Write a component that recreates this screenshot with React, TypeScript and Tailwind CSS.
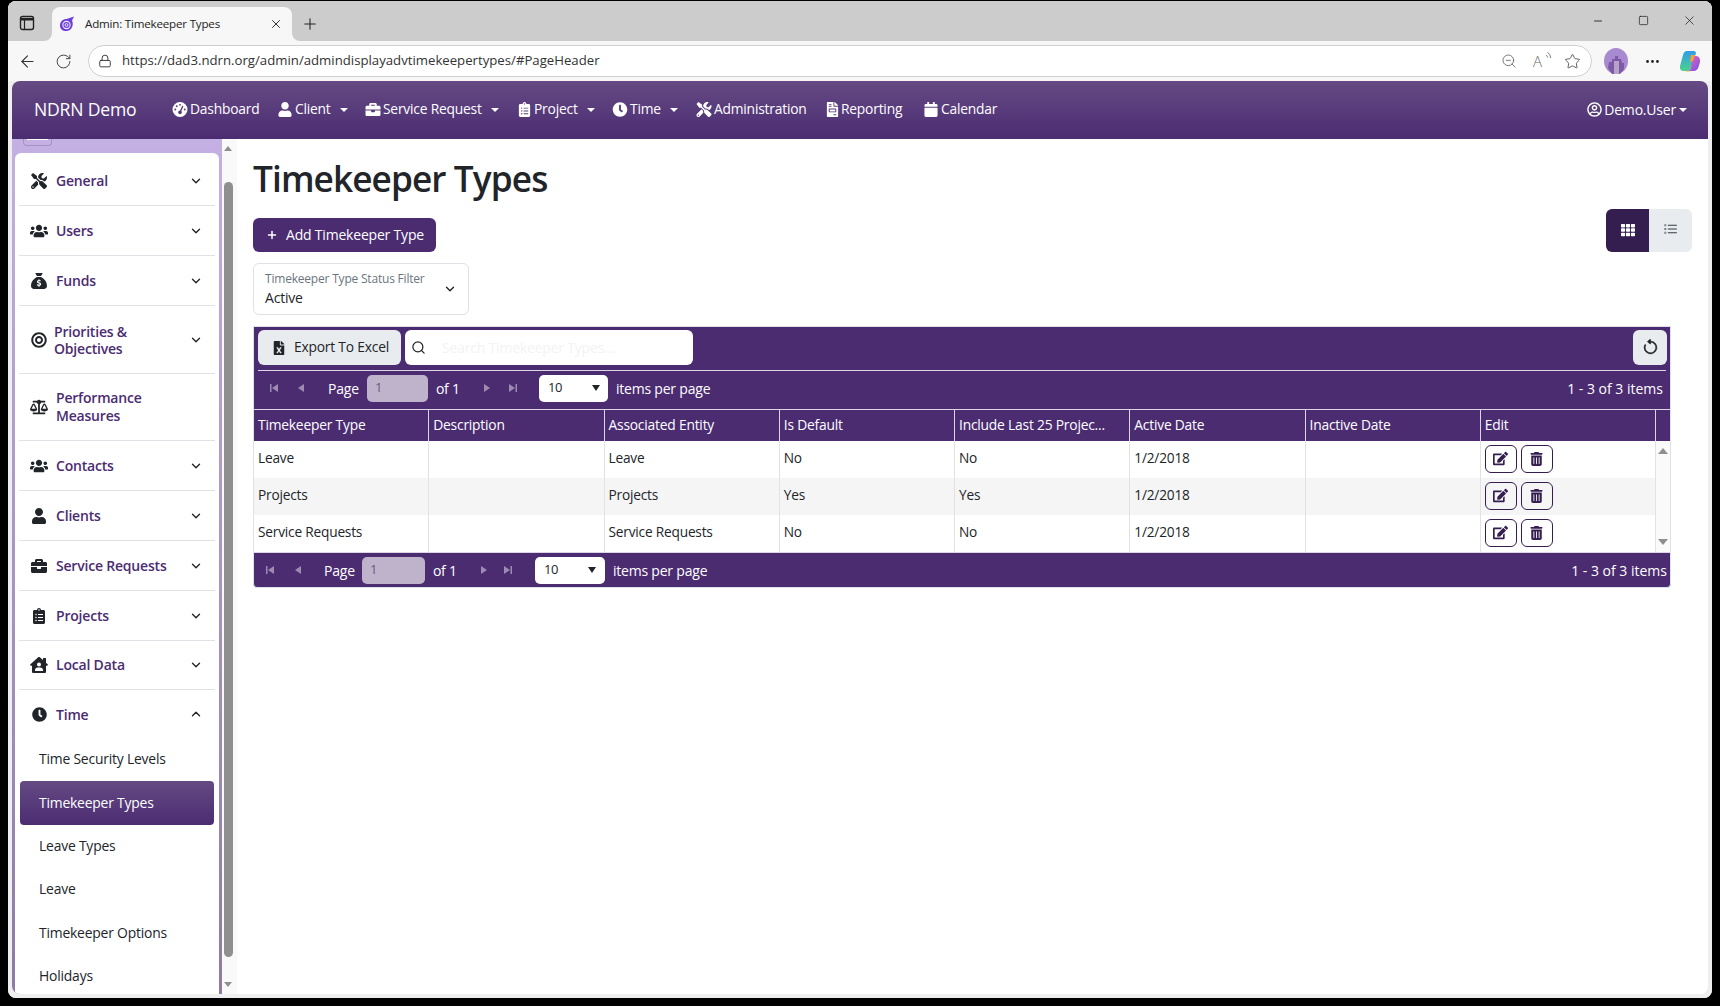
import React from 'react';
import {
  ArrowLeft, ChevronDown, ChevronUp, Lock, Minus, MoreHorizontal, Plus, RotateCw, Search, Square, Star, X, ZoomOut,
} from 'lucide-react';
import {
  FaBalanceScale, FaBriefcase, FaBullseye, FaCalendar, FaClipboardList, FaClock, FaEdit, FaFileExcel, FaFileInvoice,
  FaHouseUser, FaRegUserCircle, FaTh, FaTools, FaUser, FaUsers,
} from 'react-icons/fa';
import { FaGaugeHigh, FaSackDollar, FaTrashCan } from 'react-icons/fa6';
import { BsArrowCounterclockwise, BsListTask } from 'react-icons/bs';

const navItems = [
  { label: 'Dashboard', icon: FaGaugeHigh, w: 'w-[105px]', iw: 'w-[16px]' },
  { label: 'Client', icon: FaUser, w: 'w-[88px]', iw: 'w-[16px]', caret: true },
  { label: 'Service Request', icon: FaBriefcase, w: 'w-[152px]', iw: 'w-[16px]', caret: true },
  { label: 'Project', icon: FaClipboardList, w: 'w-[95px]', iw: 'w-[15px]', caret: true },
  { label: 'Time', icon: FaClock, w: 'w-[84px]', iw: 'w-[16px]', caret: true },
  { label: 'Administration', icon: FaTools, w: 'w-[130px]', iw: 'w-[16px]' },
  { label: 'Reporting', icon: FaFileInvoice, w: 'w-[97px]', iw: 'w-[13px]' },
  { label: 'Calendar', icon: FaCalendar, w: 'w-[90px]', iw: 'w-[16px]' },
];

const sideItems = [
  { label: 'General', icon: FaTools, h: 'h-[50px] pt-[1px]' },
  { label: 'Users', icon: FaUsers, h: 'h-[50px] pt-[1px]' },
  { label: 'Funds', icon: FaSackDollar, h: 'h-[50px] pt-[1px]' },
  { label: 'Priorities & Objectives', icon: FaBullseye, h: 'h-[68px]', tight: true },
  { label: 'Performance Measures', icon: FaBalanceScale, h: 'h-[67px]', noChevron: true },
  { label: 'Contacts', icon: FaUsers, h: 'h-[50px] pt-[1px]' },
  { label: 'Clients', icon: FaUser, h: 'h-[50px] pt-[1px]' },
  { label: 'Service Requests', icon: FaBriefcase, h: 'h-[50px]' },
  { label: 'Projects', icon: FaClipboardList, h: 'h-[50px]' },
  { label: 'Local Data', icon: FaHouseUser, h: 'h-[49px]' },
];

const subItems = ['Time Security Levels', 'Timekeeper Types', 'Leave Types', 'Leave', 'Timekeeper Options', 'Holidays'];

const columns = ['Timekeeper Type', 'Description', 'Associated Entity', 'Is Default', 'Include Last 25 Projec...', 'Active Date', 'Inactive Date', 'Edit'];

const rows = [
  { type: 'Leave', entity: 'Leave', isDefault: 'No', last25: 'No', active: '1/2/2018' },
  { type: 'Projects', entity: 'Projects', isDefault: 'Yes', last25: 'Yes', active: '1/2/2018' },
  { type: 'Service Requests', entity: 'Service Requests', isDefault: 'No', last25: 'No', active: '1/2/2018' },
];

function TabsIcon() {
  return (
    <svg viewBox="0 0 16 16" className="h-[16px] w-[16px]" fill="none" stroke="#222">
      <rect x="1.500" y="1.500" width="13" height="13" rx="2" strokeWidth="1.4" />
      <path d="M1.500 4.200h13" strokeWidth="2.400" />
      <path d="M5.500 4v10" strokeWidth="1.200" />
    </svg>
  );
}

function Favicon() {
  return (
    <svg viewBox="0 0 16 16" className="h-[16px] w-[16px]">
      <path d="M1 9.500C1 5.500 4 3 7.500 3L15 .500 13 4.500c2 4 0 10-5 10.500-4 .5-7-2-7-5.500z" fill="#6d3fd6" />
      <circle cx="7.500" cy="9" r="3.600" fill="none" stroke="#efe8ff" strokeWidth="1.100" />
      <circle cx="7.500" cy="9" r="1.400" fill="none" stroke="#efe8ff" strokeWidth="1" />
    </svg>
  );
}

function Avatar() {
  return (
    <svg viewBox="0 0 24 26" className="h-[26px] w-[24px]">
      <ellipse cx="12" cy="13" rx="12" ry="13" fill="#a88ad0" />
      <path d="M5 14h3v-3h3v-3h3v3h3l1 4h2v6l-4 5H8l-4-6z" fill="#7d5aa8" />
      <rect x="10" y="13" width="5" height="13" fill="#b9a2c8" />
    </svg>
  );
}

function Copilot() {
  return (
    <svg viewBox="0 0 24 24" className="h-[24px] w-[24px]">
      <defs>
        <linearGradient id="cpA" x1="0" y1="0" x2="0" y2="1">
          <stop offset="0" stopColor="#2f9de8" />
          <stop offset="1" stopColor="#4fd18b" />
        </linearGradient>
        <linearGradient id="cpB" x1="0" y1="0" x2="1" y2="1">
          <stop offset="0" stopColor="#e86ac0" />
          <stop offset="1" stopColor="#7b4fe0" />
        </linearGradient>
      </defs>
      <path d="M9 2h7c1 0 2 1 2 2l-5 15c-.5 2-2 3-4 3H6c-3 0-4.500-2-4-5L5 6c.5-2 2-4 4-4z" fill="url(#cpA)" />
      <path d="M15 7h3c3 0 4.500 3 4 6l-1.500 5c-.5 2-2.500 4-4.500 4H9c2 0 3.500-1 4-3z" fill="url(#cpB)" />
      <path d="M7 22h6c-2 1-4 1-6 0z" fill="#f6c244" />
      <path d="M13 6h4l-2 6-3 1z" fill="#f4a13a" />
    </svg>
  );
}

function ReadAloud() {
  return (
    <span className="relative block h-[20px] w-[20px] text-[#666]">
      <span className="absolute left-[2px] top-0 text-[15px] font-light leading-[20px]">A</span>
      <svg viewBox="0 0 8 10" className="absolute right-[-2px] top-0 h-[10px] w-[8px]" fill="none" stroke="currentColor" strokeWidth="0.9">
        <path d="M1 4c1 .5 1.500 1.500 1.500 2.500M2.500 1.500C4.500 2.500 5.500 4.500 5.500 7" />
      </svg>
    </span>
  );
}

function PagerIcon({ kind }: { kind: 'first' | 'prev' | 'next' | 'last' }) {
  return (
    <svg viewBox="0 0 10 10" className="h-[10px] w-[10px] fill-[#9d8bb2]">
      {kind === 'first' && <path d="M1 1h1.500v8H1zM9 1v8L3 5z" />}
      {kind === 'prev' && <path d="M8 1v8L2 5z" />}
      {kind === 'next' && <path d="M2 1v8l6-4z" />}
      {kind === 'last' && <path d="M7.500 1H9v8H7.500zM1 1v8l6-4z" />}
    </svg>
  );
}

function PagerSelect({ arrow }: { arrow: string }) {
  return (
    <div className={`flex h-[27px] items-center justify-between rounded-[5px] bg-white text-[13px] text-[#212529] ${arrow}`}>
      <span>10</span>
      <svg viewBox="0 0 8 6" className="h-[6px] w-[8px] fill-[#212529]">
        <path d="M0 0h8L4 6z" />
      </svg>
    </div>
  );
}

function Pager({ top }: { top?: boolean }) {
  return (
    <div className="flex h-full items-center text-white">
      <div className={top ? 'flex w-[20px] justify-center ml-[10px]' : 'flex w-[20px] justify-center ml-[6px]'}>
        <PagerIcon kind="first" />
      </div>
      <div className={top ? 'flex w-[20px] justify-center ml-[7px]' : 'flex w-[20px] justify-center ml-[8px]'}>
        <PagerIcon kind="prev" />
      </div>
      <span className={top ? 'ml-[17px] text-[14px]' : 'ml-[16px] text-[14px]'}>Page</span>
      <div className={top ? 'ml-[8px] flex h-[27px] w-[61px] items-center rounded-[5px] bg-[#bfb2cb] pl-[8px] text-[13px] text-[#6c5a80]' : 'ml-[7px] flex h-[27px] w-[63px] items-center rounded-[5px] bg-[#bfb2cb] pl-[8px] text-[13px] text-[#6c5a80]'}>
        1
      </div>
      <span className="ml-[8px] w-[24px] whitespace-nowrap text-[14px]">of 1</span>
      <div className="ml-[17px] flex w-[20px] justify-center">
        <PagerIcon kind="next" />
      </div>
      <div className={top ? 'flex w-[20px] justify-center ml-[6px]' : 'flex w-[20px] justify-center ml-[4px]'}>
        <PagerIcon kind="last" />
      </div>
      <div className={top ? 'ml-[16px] w-[69px]' : 'ml-[17px] w-[70px]'}>
        <PagerSelect arrow={top ? 'pl-[9px] pr-[8px]' : 'pl-[9px] pr-[9px]'} />
      </div>
      <span className="ml-[8px] text-[14px]">items per page</span>
      <span className={top ? 'ml-auto mr-[7px] text-[14px] tracking-normal' : 'ml-auto mr-[3px] text-[14px] tracking-normal'}>1 - 3 of 3 items</span>
    </div>
  );
}

export default function App() {
  return (
    <div className="h-[1006px] w-[1720px] overflow-hidden bg-black px-2 pt-px font-['Open_Sans',sans-serif] tracking-[-0.2px]">
      <div className="flex h-[997px] flex-col overflow-hidden rounded-lg bg-[#f7f7f7]">
        {/* browser tabs */}
        <div className="flex h-[40px] shrink-0 bg-[#f7f7f7]">
          <div className="flex w-[44px] items-center justify-center rounded-br-lg bg-[#cccccc] pr-[6px] pt-[4px]">
            <TabsIcon />
          </div>
          <div className="w-[240px] bg-[#cccccc] pt-[6px]">
            <div className="flex h-full items-center rounded-t-lg bg-[#f7f7f7] pl-[7px] pr-[9px]">
              <Favicon />
              <span className="ml-[10px] pb-px text-[11.6px] text-[#222]">Admin: Timekeeper Types</span>
              <X className="ml-auto h-[14px] w-[14px] text-[#222]" strokeWidth={1.6} />
            </div>
          </div>
          <div className="flex flex-1 rounded-bl-lg bg-[#cccccc]">
            <div className="ml-[9px] flex items-center pt-[5px]">
              <Plus className="h-[18px] w-[18px] text-[#222]" strokeWidth={1.4} />
            </div>
            <div className="ml-auto flex items-center pb-[1px] pr-[15px]">
              <Minus className="h-[12px] w-[12px] text-[#222]" strokeWidth={1.8} />
              <Square className="ml-[34px] h-[13px] w-[11px] text-[#222]" strokeWidth={1.6} />
              <X className="ml-[33px] h-[15px] w-[15px] text-[#222]" strokeWidth={1.2} />
            </div>
          </div>
        </div>

        {/* address bar */}
        <div className="flex h-[40px] shrink-0 items-center bg-[#f7f7f7]">
          <ArrowLeft className="ml-[10px] h-[19px] w-[19px] text-[#333]" strokeWidth={1.4} />
          <RotateCw className="ml-[18px] h-[17px] w-[17px] text-[#444]" strokeWidth={1.4} />
          <div className="ml-[16px] flex h-[32px] w-[1504px] items-center rounded-full border border-[#cfcfcf] bg-white pl-[9px] pr-[10px]">
            <Lock className="h-[14px] w-[14px] text-[#333]" strokeWidth={1.6} />
            <span className="ml-[10px] text-[13.2px] tracking-normal text-[#333]">https://dad3.ndrn.org/admin/admindisplayadvtimekeepertypes/#PageHeader</span>
            <div className="ml-auto flex items-center gap-[13px]">
              <ZoomOut className="mr-px h-[16px] w-[16px] text-[#666]" strokeWidth={1.3} />
              <ReadAloud />
              <Star className="h-[17px] w-[17px] text-[#555]" strokeWidth={1.3} />
            </div>
          </div>
          <div className="ml-[12px]">
            <Avatar />
          </div>
          <MoreHorizontal className="ml-[16px] h-[17px] w-[17px] text-[#222]" strokeWidth={2} />
          <div className="ml-[17px]">
            <Copilot />
          </div>
        </div>

        <div className="flex min-h-0 flex-1 flex-col bg-[#efefef] px-[4px] pb-[4px]">
          {/* app nav */}
          <nav className="flex h-[58px] shrink-0 items-center rounded-t-lg bg-gradient-to-b from-[#654a84] to-[#4b2c71] pb-[1px] text-white">
            <span className="ml-[22px] w-[138px] text-[17.6px]">NDRN Demo</span>
            {navItems.map((item) => (
              <div key={item.label} className={`flex items-center ${item.w}`}>
                <item.icon className={`h-[15px] shrink-0 ${item.iw}`} />
                <span className="ml-[2px] whitespace-nowrap text-[13.8px]">{item.label}</span>
                {item.caret && <span className="ml-[9px] h-0 w-0 border-x-[4px] border-t-[4px] border-x-transparent border-t-white" />}
              </div>
            ))}
            <div className="ml-auto mr-[21px] flex items-center">
              <FaRegUserCircle className="h-[15px] w-[15px]" />
              <span className="ml-[2px] text-[14px]">Demo.User</span>
              <span className="ml-[3px] h-0 w-0 border-x-[4px] border-t-[4px] border-x-transparent border-t-white" />
            </div>
          </nav>

          <div className="flex min-h-0 flex-1 overflow-hidden rounded-b-lg bg-white">
            {/* sidebar */}
            <aside className="w-[210px] shrink-0 overflow-hidden bg-gradient-to-b from-[#c4b0e2] to-[#8d7ba6] px-[3px]">
              <div className="h-[14px] pl-[8px]">
                <div className="h-[7px] w-[29px] rounded-b border-x border-b border-[#a892c4] px-[3px]">
                  <div className="h-[1px] w-full bg-white" />
                </div>
              </div>
              <div className="h-full rounded-t-md bg-white px-[4px] pt-[3px]">
                {sideItems.map((item) => (
                  <div key={item.label} className={`flex items-center border-b border-[#dee2e6] pl-[12px] pr-[12px] text-[#4b2c71] ${item.h}`}>
                    <span className="flex w-[16px] shrink-0 justify-center text-[#212529]">
                      <item.icon className="h-[16px] w-[18px] shrink-0" />
                    </span>
                    <span className={`${item.tight ? 'ml-[7px] leading-[17px]' : 'ml-[9px] leading-[18px]'} w-[118px] text-[14px] font-semibold`}>{item.label}</span>
                    {!item.noChevron && <ChevronDown className="ml-auto h-[14px] w-[14px] text-[#212529]" strokeWidth={2.4} />}
                  </div>
                ))}
                <div className="flex h-[48px] items-center pl-[12px] pr-[12px] text-[#4b2c71]">
                  <span className="flex w-[16px] shrink-0 justify-center text-[#212529]">
                    <FaClock className="h-[15px] w-[15px]" />
                  </span>
                  <span className="ml-[9px] text-[14px] font-semibold">Time</span>
                  <ChevronUp className="ml-auto h-[14px] w-[14px] text-[#212529]" strokeWidth={2.4} />
                </div>
                {subItems.map((label) => {
                  const active = label === 'Timekeeper Types';
                  return (
                    <div
                      key={label}
                      className={`mx-px flex h-[43.4px] items-center rounded pl-[19px] text-[13.9px] ${active ? 'bg-gradient-to-b from-[#654a84] to-[#4b2c71] text-white' : 'text-[#212529]'}`}
                    >
                      {label}
                    </div>
                  );
                })}
              </div>
            </aside>

            {/* sidebar scrollbar */}
            <div className="flex w-[15px] shrink-0 flex-col items-center bg-[#f9f9f9] pr-[3px] pt-[7px]">
              <div className="h-0 w-0 border-x-[4.500px] border-b-[5px] border-x-transparent border-b-[#8f8f8f]" />
              <div className="mt-[31px] h-[775px] w-[9px] rounded-full bg-[#8f8f8f]" />
              <div className="mt-[25px] h-0 w-0 border-x-[4.500px] border-t-[5px] border-x-transparent border-t-[#8f8f8f]" />
            </div>

            {/* main */}
            <main className="min-w-0 flex-1 bg-white pl-[16px] pr-[16px]">
              <div className="flex items-start justify-between">
                <div>
                  <h1 className="mt-[15px] text-[35.2px] font-semibold leading-[48px] tracking-[-0.9px] text-[#212529]">Timekeeper Types</h1>
                  <button className="mt-[16px] flex h-[34px] w-[183px] items-center rounded-md bg-[#4b2c71] pb-px pl-[13px] text-[14px] text-white">
                    <Plus className="h-[12px] w-[12px]" strokeWidth={3} />
                    <span className="ml-[8px] font-medium">Add Timekeeper Type</span>
                  </button>
                  <div className="mt-[11px] flex h-[52px] w-[216px] items-center justify-between rounded-md border border-[#dee2e6] pl-[11px] pr-[11px]">
                    <div>
                      <div className="text-[12px] leading-[16px] text-[#6c757d]">Timekeeper Type Status Filter</div>
                      <div className="mt-px text-[14px] leading-[20px] text-[#212529]">Active</div>
                    </div>
                    <ChevronDown className="h-[14px] w-[14px] text-[#212529]" strokeWidth={2.4} />
                  </div>
                </div>
                <div className="mt-[70px] flex h-[43px] w-[86px] overflow-hidden rounded-md">
                  <div className="flex w-[43px] items-center justify-center bg-[#341e50] pb-[2px] text-white">
                    <FaTh className="h-[14px] w-[14px]" />
                  </div>
                  <div className="flex w-[43px] items-center justify-center bg-[#e9ecef] pb-[2px] text-[#343a40]">
                    <BsListTask className="h-[15px] w-[15px]" />
                  </div>
                </div>
              </div>

              {/* grid */}
              <div className="mr-[21px] mt-[11px] overflow-hidden rounded-b border border-[#dee2e6] bg-[#4b2c71]">
                <div className="flex h-[38px] items-end pl-[4px] pr-[3px]">
                  <div className="flex h-[35px] w-full items-center">
                    <button className="flex h-[35px] w-[143px] items-center rounded-md bg-[#e9ecef] pl-[15px] text-[13.8px] text-[#212529]">
                      <FaFileExcel className="h-[14px] w-[12px]" />
                      <span className="ml-[9px]">Export To Excel</span>
                    </button>
                    <div className="ml-[4px] flex h-[35px] w-[288px] items-center rounded-md bg-white pl-[6px] text-[14px] text-[#f3f3f3]">
                      <Search className="h-[15px] w-[15px] text-[#212529]" strokeWidth={2} />
                      <span className="ml-[16px]">Search Timekeeper Types...</span>
                    </div>
                    <button className="ml-auto flex h-[35px] w-[34px] items-center justify-center rounded-md bg-[#e9ecef] text-[#212529]">
                      <BsArrowCounterclockwise className="h-[17px] w-[17px]" strokeWidth={0.6} />
                    </button>
                  </div>
                </div>
                <div className="mx-[4px] mt-[5px] h-px bg-[#ddd5e6]" />
                <div className="h-[38px] pb-[4px]">
                  <Pager top />
                </div>
                <div className="grid grid-cols-[repeat(8,175.25px)_15px] border-t border-[#ddd5e6] text-white">
                  {columns.map((c) => (
                    <div key={c} className="flex h-[31px] items-center whitespace-nowrap border-r border-[#ddd5e6] pl-[4px] text-[13.8px] font-medium">
                      {c}
                    </div>
                  ))}
                  <div />
                </div>
                <div className="flex bg-white text-[13.7px] text-[#212529]">
                  <div className="w-[1402px]">
                    {rows.map((r, i) => (
                      <div key={r.type} className={`grid h-[37px] grid-cols-[repeat(8,175.25px)] ${i === 1 ? 'bg-[#f5f5f5]' : 'bg-white'}`}>
                        {[r.type, '', r.entity, r.isDefault, r.last25, r.active, ''].map((v, j) => (
                          <div key={j} className="flex items-center border-r border-[#e2e2e2] pb-[2px] pl-[4px]">{v}</div>
                        ))}
                        <div className="flex items-center gap-[4px] border-r border-[#e2e2e2] pb-[2px] pl-[4px]">
                          <button className="flex h-[28px] w-[32px] items-center justify-center rounded-md border border-[#341e50] text-[#341e50]">
                            <FaEdit className="h-[15px] w-[15px]" />
                          </button>
                          <button className="flex h-[28px] w-[32px] items-center justify-center rounded-md border border-[#341e50] text-[#341e50]">
                            <FaTrashCan className="h-[14px] w-[13px]" />
                          </button>
                        </div>
                      </div>
                    ))}
                  </div>
                  <div className="flex flex-1 flex-col items-center justify-between bg-[#fafafa] py-[7px]">
                    <div className="h-0 w-0 border-x-[5px] border-b-[6px] border-x-transparent border-b-[#8f8f8f]" />
                    <div className="h-0 w-0 border-x-[5px] border-t-[6px] border-x-transparent border-t-[#8f8f8f]" />
                  </div>
                </div>
                <div className="h-[35px] border-t border-[#ddd5e6]">
                  <Pager />
                </div>
              </div>
            </main>
          </div>
        </div>
      </div>
    </div>
  );
}
